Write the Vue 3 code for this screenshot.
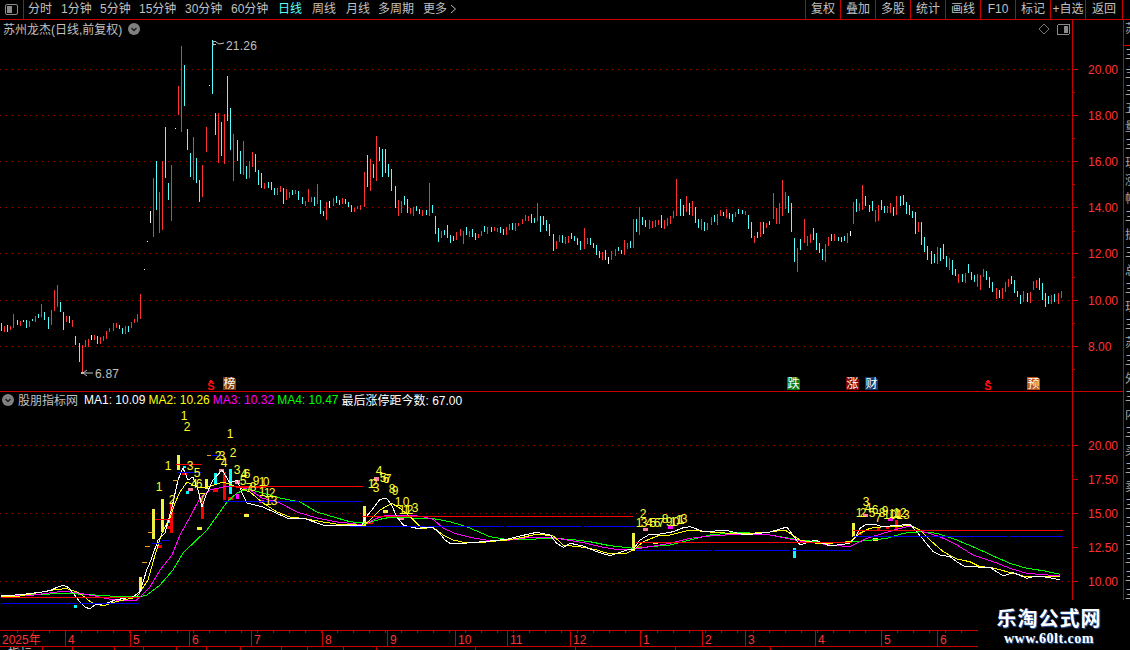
<script setup>
const periods = [['分时', 33], ['1分钟', 39], ['5分钟', 39], ['15分钟', 46], ['30分钟', 46], ['60分钟', 47], ['日线', 34], ['周线', 34], ['月线', 32], ['多周期', 45], ['更多', 40]]
const actions = ['复权', '叠加', '多股', '统计', '画线', 'F10', '标记', '+自选', '返回']

const candleSets = [
  [0, 200, '3 370 393 c;12 378 396 r;21 375 396 c;30 378 390 r;39 342 384 r;51 360 375 c;60 363 378 r;69 360 366 c;78 360 384 c;87 363 381 r;96 357 363 c;105 348 366 r;114 342 354 c;123 312 351 r;132 336 360 c;144 351 387 c;153 330 375 r;162 270 333 r;171 255 321 r;180 306 336 c;189 336 390 c;198 348 366 r;207 348 369 c;216 360 381 r;225 408 435 c;237 429 486 c;246 435 516 r;255 420 441 r;264 417 441 r;273 405 420 w;282 405 420 r;291 408 432 c;300 411 432 r;309 408 423 r;318 393 417 r;327 384 396 r;339 369 393 r;348 369 384 r;357 375 387 c;366 384 402 c;375 378 402 r;384 378 396 c;393 366 384 r;402 357 369 r;411 342 366 r;420 282 357 r;433 207 210 w;442 123 126 w'],
  [130, 40, '61 513 549 w;70 414 591 r;79 363 510 c;88 456 579 r;97 363 570 r;106 261 414 c;115 429 480 c;124 375 543 r;136 264 267 w;145 138 225 r;154 18 276 r;163 75 198 c;172 267 330 c;181 339 411 c;190 291 420 r;199 354 429 c;208 420 486 c;217 375 471 r;229 261 336 r;238 135 138 w;247 0 162 c;256 219 285 c;265 219 369 r;274 246 348 c;283 222 372 r;292 108 243 c;301 204 330 c;310 282 423 r;322 300 363 c;331 333 402 c;340 303 405 r;349 378 417 c;358 363 414 r;367 336 381 r;376 342 396 c;385 390 435 c;394 399 444 c;403 429 447 r;415 426 444 c;424 426 450 c;433 444 465 c;442 444 465 r;451 438 456 r;460 444 492 c;469 447 480 r;478 456 474 r;487 450 465 c;496 450 462 r;505 453 480 c;517 471 492 c;526 483 498 r;535 447 486 r;544 471 486 r;553 471 498 c;562 432 492 r;571 480 522 c;580 513 528 c;589 486 540 r;598 483 504 w;610 474 498 r;619 468 489 c;628 480 495 c;637 474 492 r;646 477 492 c;655 486 501 c;664 495 516 c;673 504 516 r;682 498 507 r;691 495 510 r;703 396 501 r;712 345 441 c;721 357 453 r;730 372 414 c;739 288 423 r;748 321 363 c;757 327 411 c'],
  [385, 130, '1 57 129 c;10 102 141 c;19 117 183 c;31 168 234 c;40 210 258 r;49 213 249 r;58 198 225 c;67 207 249 c;76 234 252 r;85 231 258 r;94 228 243 c;103 237 252 c;112 240 258 r;124 240 255 c;133 159 258 r;142 225 249 c;151 258 312 c;160 294 336 c;169 303 324 r;178 300 315 c;187 285 324 c;196 315 339 c;205 318 333 c;214 306 330 r;226 297 318 r;235 303 342 r;244 291 315 c;253 303 321 r;262 297 321 c;271 309 330 c;280 312 324 r;289 303 318 r;298 288 306 c;307 291 312 r;319 291 306 c;328 291 303 r;337 294 306 r;346 291 309 c;355 297 315 c;364 291 315 r;373 282 300 r;382 279 300 c;391 279 303 r;400 279 288 r;412 267 282 r;421 255 273 r;430 258 273 r;439 252 279 c;448 264 279 c;457 219 273 r;466 258 306 c;475 258 285 c;484 270 303 c;493 282 318 c;505 312 363 c;514 333 357 r;523 315 336 r;532 315 339 c;541 321 342 r;550 318 339 r;559 309 327 c;568 318 333 c;577 324 345 c;586 333 360 c;598 294 357 r;607 324 342 r;616 324 345 c;625 339 354 c;634 345 375 c;643 363 384 c;652 366 390 r;661 360 390 c;670 381 402 w;679 363 390 r;691 357 378 r;700 351 363 c;709 360 372 c;718 330 375 r;727 339 357 r;736 333 354 c;745 267 354 r;754 267 306 c;763 231 315 r;772 261 285 c;781 270 291 c;793 270 297 r;802 273 294 r;811 270 291 r;820 270 285 r;829 255 294 c;838 270 297 r;847 264 288 r;856 258 282 r;865 243 264 r;874 147 258 r;886 207 258 c;895 225 258 c;904 198 246 r;913 219 255 c;922 213 258 r;931 231 279 c;940 267 294 c;949 267 300 r;958 276 303 c;967 279 300 r;979 261 285 r;988 255 276 c;997 252 285 r;1006 240 258 r;1015 246 258 c;1024 237 264 r;1033 249 267 c;1042 252 276 c;1051 246 261 r;1060 237 252 c;1072 240 252 c;1081 243 255 r;1090 255 297 c;1099 276 324 c;1108 318 339 r;1117 306 324 c'],
  [760, 170, '1 156 201 r;10 156 192 c;19 159 174 r;28 153 165 c;40 69 147 r;49 114 162 r;58 99 162 r;67 30 138 r;76 66 117 r;85 78 129 c;94 99 186 c;103 204 276 c;112 234 306 r;121 207 240 c;133 147 219 r;142 198 228 r;151 192 219 r;160 174 210 c;169 189 240 c;178 219 249 c;187 237 270 c;196 222 276 r;205 201 228 r;214 192 213 c;223 192 213 r;235 201 213 c;244 201 216 c;253 198 213 c;262 189 219 r;271 183 198 w;280 96 162 r;289 87 126 c;298 99 123 r;307 45 120 r;316 78 108 c;328 105 126 c;337 93 123 c;346 120 156 r;355 105 153 r;364 90 120 c;373 108 129 c;382 108 129 r;391 99 129 r;400 111 138 c;409 78 135 r;421 78 108 c;430 75 105 c;439 96 132 c;448 105 135 c;457 123 144 c;466 126 192 c;475 156 186 r;484 156 225 c;493 201 246 c;502 228 270 c;514 243 282 c;523 252 279 c;532 231 282 r;541 234 273 c;550 222 267 c;559 258 291 c;568 264 300 r;577 270 315 c;586 297 318 c;595 312 339 r;607 312 336 c;616 309 339 r;625 282 309 c;634 306 330 c;643 315 336 c;652 312 351 r;661 315 360 r;670 297 321 r;679 303 330 c;688 321 354 c;697 336 366 c;709 354 387 r;718 360 384 c;727 354 387 r;736 336 366 r;745 327 351 r;754 318 342 c;763 330 369 c;772 363 381 c;781 375 402 c;790 363 396 r;802 369 396 c;811 366 399 r;820 333 360 r;829 330 354 r;838 324 360 c;847 339 390 c;856 369 411 c;865 378 402 c;874 375 402 r;883 372 396 c;895 369 402 r;904 363 384 r']
]

const candlePaths = { r: '', c: '', w: '' }
for (const [ox, oy, text] of candleSets) {
  for (const item of text.split(';')) {
    const [x, a, b, tone] = item.split(' ')
    const px = Math.floor(ox + Number(x) / 3) + 0.5
    const top = Math.round(oy + Number(a) / 3)
    const bottom = Math.max(top + 1, Math.round(oy + Number(b) / 3))
    candlePaths[tone] += `M${px} ${top}V${bottom}`
  }
}

const mapPoints = (ox, oy, list) => list.map(([x, y]) => `${(ox + x / 3).toFixed(1)},${(oy + y / 3).toFixed(1)}`)
const pagePoints = (list) => list.map(([x, y]) => `${x},${y}`)

const maLines = [
  {
    color: '#00ff00',
    points: [
      ...mapPoints(0, 560, [[3, 108], [100, 104], [200, 100], [270, 104], [360, 110], [420, 110]]),
      ...pagePoints([[147, 595], [160, 585], [173, 570], [183, 553], [207, 530], [227, 502], [237, 493], [247, 489], [263, 493], [280, 498], [300, 502], [317, 512], [337, 518]]),
      ...mapPoints(350, 460, [[0, 185], [50, 190], [90, 178], [120, 172], [250, 176], [300, 185], [350, 200], [420, 230], [480, 240], [540, 238], [600, 235], [660, 238], [720, 245], [780, 257], [850, 265], [900, 260], [960, 255], [1020, 240]]),
      ...pagePoints([[710, 535], [740, 532], [770, 535], [800, 540], [830, 543]]),
      ...mapPoints(850, 480, [[0, 185], [50, 182], [110, 175], [160, 160], [210, 155], [260, 160], [320, 180], [380, 205], [430, 228], [480, 250], [530, 265], [580, 272], [630, 283]])
    ]
  },
  {
    color: '#ff00ff',
    points: [
      ...mapPoints(0, 560, [[3, 106], [80, 108], [140, 100], [190, 94], [230, 98], [280, 107], [320, 116], [370, 123], [410, 120]]),
      ...pagePoints([[150, 587], [160, 570], [172, 555], [180, 535], [190, 517], [200, 498], [210, 490], [223, 487], [237, 486], [250, 490], [262, 498], [280, 503], [297, 512], [317, 518], [337, 522]]),
      ...mapPoints(350, 460, [[0, 190], [40, 195], [80, 175], [110, 165], [170, 165], [220, 170], [250, 178], [280, 205], [320, 222], [360, 232], [420, 242], [480, 240], [540, 232], [600, 232], [650, 240], [700, 248], [760, 262], [810, 270], [850, 268], [890, 262], [960, 250], [1020, 235]]),
      ...pagePoints([[710, 536], [740, 534], [770, 535], [800, 541], [830, 545]]),
      ...mapPoints(850, 480, [[0, 200], [50, 175], [100, 160], [140, 148], [180, 138], [220, 155], [270, 170], [320, 195], [370, 225], [430, 245], [480, 265], [530, 280], [630, 288]])
    ]
  },
  {
    color: '#ffff00',
    points: [
      ...mapPoints(0, 560, [[3, 110], [60, 108], [120, 97], [170, 88], [200, 86], [230, 95], [250, 108], [275, 128], [310, 138], [340, 127], [380, 118], [410, 112]]),
      ...pagePoints([[148, 580], [155, 555], [162, 533], [170, 518], [175, 503], [180, 492], [187, 482], [197, 487], [208, 487], [223, 482], [237, 487], [250, 492], [263, 503], [277, 512], [290, 517], [307, 519], [323, 522], [343, 525]]),
      ...mapPoints(350, 460, [[0, 192], [40, 198], [60, 180], [90, 150], [125, 130], [150, 145], [180, 170], [215, 205], [250, 203], [280, 225], [310, 240], [340, 247], [400, 247], [470, 240], [520, 232], [560, 222], [610, 228], [640, 255], [700, 262], [740, 270], [780, 282], [830, 280], [850, 270], [880, 245], [930, 225], [960, 225], [1000, 215], [1020, 210]]),
      ...pagePoints([[710, 532], [740, 534], [770, 532], [785, 530], [800, 540], [820, 544]]),
      ...mapPoints(850, 480, [[0, 185], [30, 160], [60, 145], [100, 140], [185, 137], [210, 150], [240, 180], [280, 215], [320, 237], [360, 245], [390, 260], [420, 262], [460, 272], [520, 288], [560, 288], [630, 290]])
    ]
  },
  {
    color: '#ffffff',
    points: [
      ...mapPoints(0, 560, [[3, 108], [60, 104], [120, 97], [150, 92], [175, 80], [190, 76], [205, 82], [220, 100], [235, 120], [255, 142], [270, 146], [285, 135], [320, 130], [345, 120], [400, 110], [420, 95], [440, 30]]),
      ...pagePoints([[151, 560], [158, 540], [165, 533], [172, 507], [178, 480], [183, 468], [188, 480], [193, 477], [198, 490], [202, 507], [206, 495], [213, 480], [222, 470], [230, 483], [237, 480], [242, 493], [247, 503], [263, 507], [287, 518], [303, 518], [323, 525], [337, 525]]),
      ...mapPoints(350, 460, [[0, 195], [35, 198], [45, 175], [70, 145], [90, 118], [110, 115], [125, 135], [140, 170], [160, 195], [200, 205], [245, 202], [265, 215], [285, 240], [300, 250], [340, 250], [400, 245], [470, 238], [510, 228], [560, 217], [600, 225], [620, 250], [640, 262], [660, 250], [700, 258], [740, 275], [780, 287], [830, 270], [850, 268], [870, 240], [900, 222], [930, 222], [970, 215], [1000, 203], [1020, 200]]),
      ...pagePoints([[705, 532], [725, 530], [745, 535], [770, 532], [787, 527], [800, 545], [815, 540], [830, 546]]),
      ...mapPoints(850, 480, [[0, 190], [15, 175], [30, 145], [50, 132], [75, 133], [95, 140], [180, 133], [200, 155], [225, 185], [250, 215], [270, 225], [300, 230], [320, 245], [345, 260], [420, 262], [440, 275], [460, 288], [490, 278], [530, 295], [560, 288], [600, 293], [630, 300]])
    ]
  }
].map((line) => ({ color: line.color, points: line.points.join(' ') }))

const levels = [
  [176, 202, 464.5, 'red'], [230, 363, 486.5, 'red'], [362, 633, 516.5, 'red'], [636, 852, 542.5, 'red'], [853, 1063, 530.5, 'red'], [1, 140, 597.5, 'red'], [155, 170, 519.5, 'red'], [236, 266, 487.5, 'red'],
  [177, 201, 472.5, 'blue'], [207, 222, 455.5, 'blue'], [223, 362, 501.5, 'blue'], [350, 635, 526.5, 'blue'], [636, 852, 550.5, 'blue'], [853, 1063, 536.5, 'blue'], [1, 139, 603.5, 'blue'], [152, 162, 543.5, 'blue'], [162, 170, 540.5, 'blue']
]
const dashes = [[142, 147, 562.5], [145, 150, 546.5], [148, 153, 532.5], [173, 178, 480.5], [207, 211, 455.5]]

const bars = [
  [139, 577, 3, 14, '#f0f040'], [152, 509, 3, 30, '#f0f040'], [161, 499, 3, 33, '#f0f040'], [170, 502, 3, 31, '#ff0000'], [177, 455, 3, 15, '#f0f040'],
  [201, 502, 3, 17, '#ff0000'], [205, 479, 3, 10, '#f0f040'], [214, 473, 3, 12, '#00ffff'], [223, 472, 3, 28, '#ff0000'], [229, 469, 3, 25, '#00ffff'],
  [183, 466, 3, 2, '#00ffff'], [182, 472, 5, 3, '#ff0000'], [188, 488, 5, 3, '#ff80a0'], [186, 491, 3, 3, '#00ffff'], [166, 526, 4, 3, '#ff0000'], [167, 520, 3, 3, '#00ffff'],
  [219, 469, 5, 3, '#ff80a0'], [213, 489, 5, 3, '#ff0000'], [228, 497, 5, 3, '#ff0000'], [235, 480, 5, 4, '#ff80a0'], [236, 494, 3, 5, '#ff00ff'], [259, 500, 5, 3, '#ff00ff'],
  [244, 514, 5, 3, '#f0f040'], [197, 527, 5, 3, '#f0f040'], [157, 545, 5, 3, '#ff0000'], [74, 605, 3, 3, '#00ffff'],
  [363, 506, 3, 20, '#f0f040'], [367, 521, 6, 3, '#ff0000'], [383, 510, 5, 3, '#f0f040'], [374, 477, 5, 4, '#ff80a0'], [399, 517, 5, 3, '#ff80a0'],
  [632, 533, 3, 18, '#f0f040'], [637, 546, 5, 3, '#ff0000'], [643, 528, 5, 3, '#ff80a0'], [668, 526, 5, 3, '#ff00ff'], [653, 542, 5, 2, '#f0f040'], [793, 548, 3, 10, '#00ffff'],
  [852, 523, 3, 14, '#f0f040'], [857, 532, 5, 3, '#ff0000'], [863, 514, 5, 3, '#ff80a0'], [877, 527, 3, 3, '#ff0000'], [886, 526, 3, 3, '#ff0000'], [888, 518, 5, 3, '#ff00ff'], [895, 520, 3, 10, '#ff0000'], [873, 538, 5, 3, '#f0f040']
]

const digits = [
  ['1', 184, 415], ['2', 187, 426], ['1', 230, 433], ['2', 233, 452], ['2', 218, 455], ['3', 222, 455], ['4', 224, 462], ['1', 168, 465], ['3', 190, 465], ['5', 197, 472],
  ['1', 159, 486], ['3', 237, 469], ['4', 244, 473], ['6', 247, 473], ['5', 243, 480], ['4', 194, 483], ['6', 199, 483], ['7', 202, 497], ['2', 172, 499], ['7', 249, 487], ['8', 253, 486], ['9', 256, 480],
  ['1', 262, 481], ['0', 266, 481], ['1', 262, 491], ['1', 267, 492], ['2', 272, 492], ['1', 268, 500], ['3', 274, 500],
  ['1', 371, 483], ['2', 374, 483], ['3', 376, 487], ['4', 379, 470], ['5', 383, 477], ['6', 386, 478], ['7', 388, 478], ['8', 392, 488], ['9', 395, 490], ['1', 398, 501], ['0', 406, 501], ['1', 402, 509], ['1', 406, 509], ['1', 408, 509], ['2', 410, 509], ['3', 415, 507],
  ['2', 643, 513], ['1', 639, 522], ['3', 644, 522], ['4', 649, 522], ['5', 653, 522], ['6', 657, 522], ['7', 661, 522], ['8', 665, 518], ['9', 669, 521], ['1', 673, 521], ['0', 676, 521], ['1', 679, 519], ['1', 681, 519], ['3', 684, 518],
  ['3', 866, 501], ['1', 859, 512], ['2', 863, 512], ['4', 868, 507], ['5', 872, 512], ['6', 875, 509], ['7', 878, 517], ['8', 882, 512], ['9', 885, 510], ['10', 890, 514], ['11', 895, 513], ['12', 900, 512], ['13', 903, 514]
]

const mainGrid = [20, 18, 16, 14, 12, 10, 8].map((value, index) => ({ label: value.toFixed(2), y: Math.round(69 + 46.1 * index) }))
const mainMinor = [92, 138, 184, 231, 277, 323, 369].map((y) => y + 0.5)
const subGrid = [445, 513, 581]
const subTicks = [['20.00', 445.5], ['17.50', 479.5], ['15.00', 513.5], ['12.50', 547.5], ['10.00', 581.5]]

const months = [['4', 65], ['5', 130], ['6', 189], ['7', 251], ['8', 322], ['9', 387], ['10', 455], ['11', 507], ['12', 570], ['1', 640], ['2', 702], ['3', 745], ['4', 815], ['5', 881], ['6', 937]]
const minorTimes = Array.from({ length: 60 }, (_, index) => 16 * index + 17).filter((x) => x < 978)

const signs = [
  { text: '榜', x: 223, tone: '#7a3d10' },
  { text: '跌', x: 787, tone: '#0c7a14' },
  { text: '涨', x: 846, tone: '#7d0606' },
  { text: '财', x: 865, tone: '#0f3c70' },
  { text: '预', x: 1027, tone: '#b9541a' }
]
const dollarMarks = [211, 988]

const tabs = [
  { label: '指标', width: 43 }, { label: '', width: 30 }, { label: '', width: 42 }, { label: '', width: 29 }, { label: '', width: 33 },
  { label: '', width: 30 }, { label: '', width: 34 }, { label: '', width: 41 }, { label: '', width: 26 }, { label: '', width: 36 }, { label: '', width: 33 },
  { label: '', width: 99 }, { label: '', width: 100 }, { label: '', width: 100 }, { label: '', width: 95 }
]

const sideRows = ['苏', '三', '主', '三', '五', '量', '三', '现', '涨', '幅', '三', '振', '三', '总', '三', '现', '三', '苏', '三', '外', '三', '内', '三', '买', '三', '卖', '三', '三', '三', '三', '三', '三', '三', '三']
</script>

<template>
  <div class="screen">
    <header class="toolbar">
      <button class="panel-toggle" aria-label="侧栏">
        <svg width="13" height="11" viewBox="0 0 13 11">
          <rect x="0.5" y="0.5" width="12" height="10" rx="1.5" class="icon-frame" />
          <rect x="2" y="2" width="5" height="7" class="icon-fill" />
        </svg>
      </button>
      <nav class="periods">
        <span v-for="item in periods" :key="item[0]" class="period" :class="{ active: item[0] === '日线' }" :style="{ width: item[1] + 'px' }">{{ item[0] }}<svg v-if="item[0] === '更多'" width="7" height="10" viewBox="0 0 7 10" class="more-mark"><path d="M1 1L5.5 5L1 9" /></svg></span>
      </nav>
      <div class="actions">
        <span v-for="item in actions" :key="item" class="action">{{ item }}</span>
      </div>
    </header>

    <div class="workspace">
      <div class="charts">
        <section class="panel main-panel">
          <svg class="plot" width="1072" height="371" viewBox="0 20 1072 371">
            <defs>
              <pattern id="main-dots" patternUnits="userSpaceOnUse" width="6" height="1"><rect width="1" height="1" class="dot" /></pattern>
            </defs>
            <rect v-for="row in mainGrid" :key="row.label" x="0" :y="row.y" width="1072" height="1" fill="url(#main-dots)" />
            <path :d="candlePaths.r" class="candle-red" />
            <path :d="candlePaths.c" class="candle-cyan" />
            <path :d="candlePaths.w" class="candle-white" />
            <path d="M213 41V46M213 41.5H216M213 44.5H216M216 42L219 44L224 43" class="pointer" />
            <text x="226" y="50" class="peak-label">21.26</text>
            <path d="M83 373H93M83 373L87 370M83 373L87 376" class="pointer" />
            <rect x="81" y="372" width="2" height="2" class="pointer-dot" />
            <text x="95" y="378" class="peak-label">6.87</text>
            <g v-for="sign in signs" :key="sign.text">
              <path :d="`M${sign.x} 377H${sign.x + 10}L${sign.x + 13} 380V390H${sign.x}Z`" :fill="sign.tone" />
              <text :x="sign.x + 6.5" y="388" class="sign-text">{{ sign.text }}</text>
            </g>
            <g v-for="x in dollarMarks" :key="x">
              <path :d="`M${x - 2} 382H${x + 2}L${x} 379Z`" class="dollar-cap" />
              <text :x="x" y="390" class="dollar-text">S</text>
            </g>
            <path d="M1044 24L1049 29L1044 34L1039 29Z" class="diamond" />
            <rect x="1057.5" y="24.5" width="12" height="10" rx="1.5" class="icon-frame" />
            <rect x="1064" y="26" width="4" height="7" class="icon-fill" />
          </svg>
          <svg class="axis" width="51" height="371" viewBox="1072 20 51 371">
            <g v-for="row in mainGrid" :key="row.label">
              <path :d="`M1072 ${row.y + 0.5}H1078`" class="tick" />
              <text x="1088" :y="row.y + 4.5" class="axis-label">{{ row.label }}</text>
            </g>
            <path v-for="y in mainMinor" :key="y" :d="`M1072 ${y}H1075`" class="tick" />
          </svg>
          <div class="legend main-legend">
            <span class="stock-name">苏州龙杰(日线,前复权)</span>
            <svg width="12" height="12" viewBox="0 0 12 12" class="badge"><circle cx="6" cy="6" r="6" /><path d="M3.5 5L6 7.5L8.5 5" /></svg>
          </div>
        </section>

        <section class="panel sub-panel">
          <svg class="plot" width="1072" height="238" viewBox="0 392 1072 238">
            <defs>
              <pattern id="sub-dots" patternUnits="userSpaceOnUse" width="6" height="1"><rect width="1" height="1" class="dot" /></pattern>
            </defs>
            <rect v-for="y in subGrid" :key="y" x="0" :y="y" width="1072" height="1" fill="url(#sub-dots)" />
            <rect v-for="(bar, index) in bars" :key="index" :x="bar[0]" :y="bar[1]" :width="bar[2]" :height="bar[3]" :fill="bar[4]" />
            <polyline v-for="line in maLines" :key="line.color" :points="line.points" :stroke="line.color" class="ma-line" />
            <path v-for="(level, index) in levels" :key="index" :d="`M${level[0]} ${level[2]}H${level[1]}`" :class="level[3] === 'red' ? 'level-red' : 'level-blue'" />
            <path v-for="(dash, index) in dashes" :key="index" :d="`M${dash[0]} ${dash[2]}H${dash[1]}`" class="level-orange" />
            <text v-for="(item, index) in digits" :key="index" :x="item[1]" :y="item[2] + 4.5" class="digit">{{ item[0] }}</text>
          </svg>
          <svg class="axis" width="51" height="238" viewBox="1072 392 51 238">
            <g v-for="row in subTicks" :key="row[0]">
              <path :d="`M1072 ${row[1]}H1078`" class="tick" />
              <text x="1088" :y="row[1] + 4" class="axis-label">{{ row[0] }}</text>
            </g>
          </svg>
          <div class="legend sub-legend">
            <svg width="12" height="12" viewBox="0 0 12 12" class="badge"><circle cx="6" cy="6" r="6" /><path d="M3.5 5L6 7.5L8.5 5" /></svg>
            <span class="stock-name">股朋指标网</span>
            <span class="ma white">MA1: 10.09</span>
            <span class="ma yellow">MA2: 10.26</span>
            <span class="ma magenta">MA3: 10.32</span>
            <span class="ma green">MA4: 10.47</span>
            <span class="ma white">最后涨停距今数: 67.00</span>
          </div>
        </section>

        <div class="time-axis">
          <svg width="978" height="16" viewBox="0 630 978 16">
            <path v-for="x in minorTimes" :key="x" :d="`M${x + 0.5} 631V633`" class="tick" />
            <text x="2" y="644" class="axis-label">2025年</text>
            <g v-for="month in months" :key="month[1]">
              <path :d="`M${month[1] + 0.5} 631V646`" class="tick" />
              <text :x="month[1] + 3" y="644" class="axis-label">{{ month[0] }}</text>
            </g>
          </svg>
        </div>

        <div class="tabs">
          <span v-for="(tab, index) in tabs" :key="index" class="tab" :style="{ width: tab.width + 'px' }">{{ tab.label }}</span>
        </div>
      </div>

      <aside class="side">
        <span v-for="(row, index) in sideRows" :key="index" class="side-row">{{ row }}</span>
      </aside>
    </div>

    <div class="watermark">
      <strong class="mark-title">乐淘公式网</strong>
      <span class="mark-url">www.60lt.com</span>
    </div>
  </div>
</template>

<style>
html, body { margin: 0; background: #000; }
</style>

<style scoped>
.screen {
  position: relative;
  width: 1130px;
  height: 650px;
  overflow: hidden;
  background: #000;
  font-family: "Liberation Sans", "Noto Sans CJK SC", sans-serif;
  color: #c0c0c0;
}

.toolbar {
  display: flex;
  align-items: stretch;
  height: 19px;
  border-bottom: 1px solid #c80000;
  font-size: 12px;
  line-height: 19px;
}
.panel-toggle {
  display: flex;
  align-items: center;
  justify-content: center;
  width: 23px;
  padding: 0 0 1px;
  border: 0;
  border-right: 1px solid #c80000;
  background: #000;
  box-sizing: content-box;
}
.periods {
  display: flex;
  margin-left: 4px;
  flex: 1;
}
.period { flex: none; white-space: nowrap; }
.period.active { color: #54ffff; }
.more-mark { margin-left: 3px; vertical-align: -1px; fill: none; stroke: #c0c0c0; }
.actions {
  display: flex;
  margin-right: 7px;
}
.action {
  width: 34px;
  border-left: 1px solid #c80000;
  text-align: center;
  white-space: nowrap;
}
.action:last-child { width: 36px; border-right: 1px solid #c80000; }

.icon-frame { fill: none; stroke: #8a8a8a; }
.icon-fill { fill: #8a8a8a; }

.workspace { display: flex; height: 630px; }
.charts { width: 1123px; flex: none; }
.panel {
  position: relative;
  display: flex;
  width: 1123px;
}
.main-panel { height: 371px; border-bottom: 1px solid #c80000; }
.sub-panel { height: 238px; }
.plot { display: block; flex: none; shape-rendering: crispEdges; }
.axis {
  display: block;
  flex: none;
  box-shadow: inset 1px 0 0 #c80000;
  shape-rendering: crispEdges;
}

.dot { fill: #a00000; }
.candle-red { stroke: #ff3232; stroke-width: 1; fill: none; }
.candle-cyan { stroke: #54ffff; stroke-width: 1; fill: none; }
.candle-white { stroke: #ffffff; stroke-width: 1; fill: none; }
.pointer { stroke: #c0c0c0; stroke-width: 1; fill: none; shape-rendering: auto; }
.pointer-dot { fill: #c0c0c0; }
.peak-label { fill: #c0c0c0; font-size: 12px; letter-spacing: 0.2px; }
.sign-text { fill: #ffffff; font-size: 12px; text-anchor: middle; }
.dollar-cap { fill: #ff1010; }
.dollar-text { fill: #ff1010; font-size: 11px; font-weight: 700; text-anchor: middle; }
.diamond { fill: none; stroke: #777777; stroke-width: 1; shape-rendering: auto; }
.tick { stroke: #c80000; stroke-width: 1; fill: none; }
.axis-label { fill: #ff3232; font-size: 12px; }
.ma-line { fill: none; stroke-width: 1; stroke-linejoin: round; }
.level-red { stroke: #ff0000; stroke-width: 1; fill: none; }
.level-blue { stroke: #0000f0; stroke-width: 1; fill: none; stroke-dasharray: 76 2; }
.level-orange { stroke: #f0a020; stroke-width: 1; fill: none; }
.digit { fill: #ffff30; font-size: 12px; text-anchor: middle; }

.legend {
  position: absolute;
  display: flex;
  align-items: center;
  font-size: 12px;
  white-space: nowrap;
}
.main-legend { top: 0; left: 3px; gap: 6px; height: 17px; }
.sub-legend { top: -1px; left: 2px; gap: 3px; height: 17px; }
.sub-legend .stock-name { margin: 0 3px 0 1px; }
.stock-name { color: #c0c0c0; }
.badge circle { fill: #808080; }
.badge path { fill: none; stroke: #1c1c1c; stroke-width: 1.4; }
.ma { font-size: 12px; }
.white { color: #ffffff; }
.yellow { color: #ffff00; }
.magenta { color: #ff00ff; }
.green { color: #00ff00; }

.time-axis {
  height: 16px;
  width: 978px;
  border-top: 1px solid #c80000;
  box-sizing: border-box;
}
.time-axis svg { display: block; shape-rendering: crispEdges; margin-top: -1px; }
.tabs {
  display: flex;
  width: 978px;
  height: 4px;
  overflow: hidden;
  border-top: 1px solid #c80000;
  box-sizing: border-box;
  font-size: 12px;
  line-height: 14px;
}
.tab {
  flex: none;
  box-sizing: border-box;
  padding-left: 8px;
  border-right: 1px solid #c80000;
  color: #c0c0c0;
  white-space: nowrap;
}

.side {
  display: flex;
  flex-direction: column;
  flex: 1;
  min-width: 0;
  overflow: hidden;
  box-shadow: inset 1px 0 0 #c80000;
  color: #a8a8a8;
  font-size: 12px;
}
.side-row {
  flex: none;
  height: 18px;
  line-height: 18px;
  padding-left: 2px;
  white-space: nowrap;
}
.side-row:first-child {
  height: 25px;
  border-bottom: 1px solid #c80000;
}

.watermark {
  position: absolute;
  right: 0;
  bottom: 0;
  display: flex;
  flex-direction: column;
  align-items: center;
  box-sizing: border-box;
  width: 152px;
  height: 50px;
  padding: 7px 10px 0 0;
  background: #000;
}
.mark-title {
  color: #ffffff;
  font-size: 20px;
  line-height: 24px;
  letter-spacing: 1px;
  text-shadow: 1px 1px 1px #2a5caa;
}
.mark-url {
  color: #ffffff;
  font-family: "Liberation Serif", serif;
  font-size: 14px;
  font-weight: 700;
  line-height: 15px;
  letter-spacing: 0.5px;
  text-shadow: 1px 1px 1px #2a5caa;
}
</style>
